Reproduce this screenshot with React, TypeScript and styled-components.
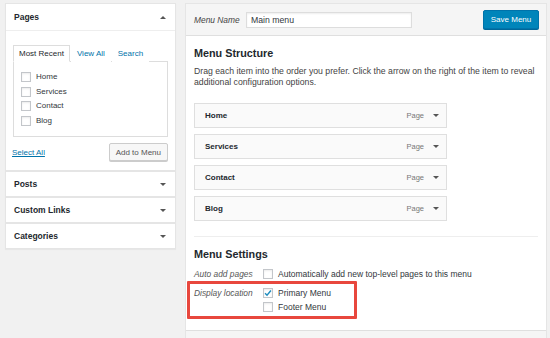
import React from 'react';
import styled, { createGlobalStyle } from 'styled-components';

const GlobalStyle = createGlobalStyle`
    html, body {
        margin: 0;
        padding: 0;
        height: 338px;
        overflow: hidden;
        background: #f1f1f1;
        font-family: "Liberation Sans", Arial, sans-serif;
        color: #23282d;
    }
`;

const Page = styled.div`
    position: relative;
    display: flex;
    align-items: flex-start;
    gap: 9px;
    padding: 3px 0 0 5px;
`;

const Sidebar = styled.div`
    width: 171px;
    display: flex;
    flex-direction: column;
`;

const Section = styled.div`
    background: #fff;
    border: 1px solid #e5e5e5;
    box-shadow: 0 1px 1px rgba(0, 0, 0, 0.04);
`;

const SectionHead = styled.div<{ $open?: boolean }>`
    height: ${(p) => (p.$open ? 26 : 24)}px;
    display: flex;
    align-items: center;
    justify-content: space-between;
    padding: 0 9px 0 8px;
    font-size: 8.5px;
    font-weight: 700;
    color: #23282d;
    border-bottom: ${(p) => (p.$open ? '1px solid #eee' : 'none')};
`;

const Caret = styled.span<{ $up?: boolean }>`
    width: 0;
    height: 0;
    border-left: 3px solid transparent;
    border-right: 3px solid transparent;
    ${(p) =>
        p.$up
            ? 'border-bottom: 3px solid #555;'
            : 'border-top: 3px solid #555;'}
`;

const SectionBody = styled.div`
    padding: 14px 7px 9px 7px;
`;

const Tabs = styled.div`
    display: flex;
    align-items: flex-end;
    gap: 1px;
    font-size: 8px;
`;

const Tab = styled.div<{ $active?: boolean }>`
    height: 15px;
    display: flex;
    align-items: center;
    padding: 0 5px;
    margin-bottom: -1px;
    color: ${(p) => (p.$active ? '#23282d' : '#0073aa')};
    background: #fff;
    border: 1px solid ${(p) => (p.$active ? '#ddd' : 'transparent')};
    border-bottom-color: ${(p) => (p.$active ? '#fff' : 'transparent')};
    position: relative;
    z-index: 1;
`;

const TabPanel = styled.div`
    box-sizing: border-box;
    border: 1px solid #ddd;
    height: 76px;
    padding: 10px 7px 0;
    display: flex;
    flex-direction: column;
    gap: 4.5px;
`;

const CheckRow = styled.label<{ $size?: number }>`
    display: flex;
    align-items: center;
    gap: 5px;
    font-size: ${(p) => p.$size ?? 8}px;
    line-height: 10px;
    color: #32373c;
`;

const Box = styled.span`
    width: 10px;
    height: 10px;
    box-sizing: border-box;
    border: 1px solid #c3c6ca;
    background: #fff;
    box-shadow: inset 0 1px 2px rgba(0, 0, 0, 0.08);
    display: flex;
    align-items: center;
    justify-content: center;
    flex-shrink: 0;
`;

const ActionRow = styled.div`
    display: flex;
    align-items: center;
    justify-content: space-between;
    margin-top: 6px;
`;

const LinkText = styled.a`
    font-size: 8px;
    color: #0073aa;
    text-decoration: underline;
    margin-left: -1px;
`;

const GreyButton = styled.button`
    height: 18px;
    padding: 0 6px;
    font-family: inherit;
    font-size: 8px;
    color: #555;
    background: #f7f7f7;
    border: 1px solid #ccc;
    border-radius: 2px;
    box-shadow: 0 1px 0 #ccc;
`;

const Editor = styled.div`
    width: 362px;
    background: #fff;
    border: 1px solid #e5e5e5;
    box-sizing: border-box;
`;

const EditorHead = styled.div`
    height: 31px;
    display: flex;
    align-items: center;
    padding: 0 7px 0 8px;
    background: #f5f5f5;
    border-bottom: 1px solid #dfdfdf;
`;

const FieldLabel = styled.span`
    font-size: 8.4px;
    font-style: italic;
    color: #444;
    width: 52px;
`;

const NameInput = styled.div`
    width: 166px;
    height: 16px;
    box-sizing: border-box;
    border: 1px solid #ddd;
    background: #fff;
    box-shadow: inset 0 1px 2px rgba(0, 0, 0, 0.07);
    display: flex;
    align-items: center;
    padding: 0 4px;
    font-size: 8.7px;
    color: #32373c;
`;

const BlueButton = styled.button`
    margin-left: auto;
    width: 56px;
    height: 19px;
    font-family: inherit;
    font-size: 8px;
    color: #fff;
    background: #0085ba;
    border: 1px solid #0073aa;
    border-radius: 2px;
    box-shadow: 0 1px 0 #006799;
    padding: 0;
`;

const EditorBody = styled.div`
    padding: 10px 8px 0 8px;
    height: 294px;
    box-sizing: border-box;
`;

const Heading = styled.div`
    font-size: 10.8px;
    font-weight: 700;
    color: #23282d;
    line-height: 14px;
`;

const Description = styled.p`
    margin: 6px 0 0;
    font-size: 8.7px;
    line-height: 11px;
    color: #444;
`;

const ItemList = styled.div`
    margin-top: 15px;
    width: 253px;
    display: flex;
    flex-direction: column;
    gap: 6px;
`;

const MenuItem = styled.div`
    height: 25px;
    box-sizing: border-box;
    display: flex;
    align-items: center;
    padding: 0 7px 0 10px;
    background: #fafafa;
    border: 1px solid #dfdfdf;
    font-size: 8px;
    font-weight: 700;
    color: #23282d;
`;

const ItemType = styled.span`
    margin-left: auto;
    font-weight: 400;
    font-size: 7.5px;
    color: #777;
    margin-right: 9px;
`;

const Divider = styled.div`
    margin-top: 15px;
    border-top: 1px solid #eee;
`;

const SettingsHeading = styled(Heading)`
    margin-top: 10px;
`;

const SettingRow = styled.div<{ $top: number }>`
    display: flex;
    align-items: flex-start;
    margin-top: ${(p) => p.$top}px;
`;

const SettingLabel = styled.span`
    width: 69px;
    font-size: 8.4px;
    font-style: italic;
    color: #555;
    line-height: 10px;
`;

const Options = styled.div`
    display: flex;
    flex-direction: column;
    gap: 4px;
`;

const Footer = styled.div`
    height: 12px;
    background: #f5f5f5;
    border-top: 1px solid #dfdfdf;
    display: flex;
    justify-content: flex-end;
    padding: 7px 7px 0;
`;

const FooterButton = styled(BlueButton)`
    margin-left: 0;
`;

const Highlight = styled.div`
    position: absolute;
    left: 187px;
    top: 281px;
    width: 170px;
    height: 38px;
    box-sizing: border-box;
    border: 3px solid #e8473d;
    border-radius: 1px;
    pointer-events: none;
`;

function Check({ checked }: { checked?: boolean }) {
    return (
        <Box>
            {checked && (
                <svg width="9" height="8" viewBox="0 0 9 8">
                    <path
                        d="M1.2 4.2 L3.4 6.4 L7.8 1.2"
                        fill="none"
                        stroke="#1e8cbe"
                        strokeWidth="1.6"
                    />
                </svg>
            )}
        </Box>
    );
}

const PAGES = ['Home', 'Services', 'Contact', 'Blog'];
const COLLAPSED = ['Posts', 'Custom Links', 'Categories'];

export default function App() {
    return (
        <>
            <GlobalStyle />
            <Page>
                <Sidebar>
                    <Section>
                        <SectionHead $open>
                            Pages
                            <Caret $up />
                        </SectionHead>
                        <SectionBody>
                            <Tabs>
                                <Tab $active>Most Recent</Tab>
                                <Tab>View All</Tab>
                                <Tab>Search</Tab>
                            </Tabs>
                            <TabPanel>
                                {PAGES.map((name) => (
                                    <CheckRow key={name}>
                                        <Check />
                                        {name}
                                    </CheckRow>
                                ))}
                            </TabPanel>
                            <ActionRow>
                                <LinkText>Select All</LinkText>
                                <GreyButton>Add to Menu</GreyButton>
                            </ActionRow>
                        </SectionBody>
                    </Section>
                    {COLLAPSED.map((name) => (
                        <Section key={name}>
                            <SectionHead>
                                {name}
                                <Caret />
                            </SectionHead>
                        </Section>
                    ))}
                </Sidebar>

                <Editor>
                    <EditorHead>
                        <FieldLabel>Menu Name</FieldLabel>
                        <NameInput>Main menu</NameInput>
                        <BlueButton>Save Menu</BlueButton>
                    </EditorHead>
                    <EditorBody>
                        <Heading>Menu Structure</Heading>
                        <Description>
                            Drag each item into the order you prefer. Click the
                            arrow on the right of the item to reveal additional
                            configuration options.
                        </Description>
                        <ItemList>
                            {PAGES.map((name) => (
                                <MenuItem key={name}>
                                    {name}
                                    <ItemType>Page</ItemType>
                                    <Caret />
                                </MenuItem>
                            ))}
                        </ItemList>
                        <Divider />
                        <SettingsHeading>Menu Settings</SettingsHeading>
                        <SettingRow $top={8}>
                            <SettingLabel>Auto add pages</SettingLabel>
                            <CheckRow $size={8.5}>
                                <Check />
                                Automatically add new top-level pages to this
                                menu
                            </CheckRow>
                        </SettingRow>
                        <SettingRow $top={9}>
                            <SettingLabel>Display location</SettingLabel>
                            <Options>
                                <CheckRow $size={8.5}>
                                    <Check checked />
                                    Primary Menu
                                </CheckRow>
                                <CheckRow $size={8.5}>
                                    <Check />
                                    Footer Menu
                                </CheckRow>
                            </Options>
                        </SettingRow>
                    </EditorBody>
                    <Footer>
                        <FooterButton>Save Menu</FooterButton>
                    </Footer>
                </Editor>
                <Highlight />
            </Page>
        </>
    );
}
